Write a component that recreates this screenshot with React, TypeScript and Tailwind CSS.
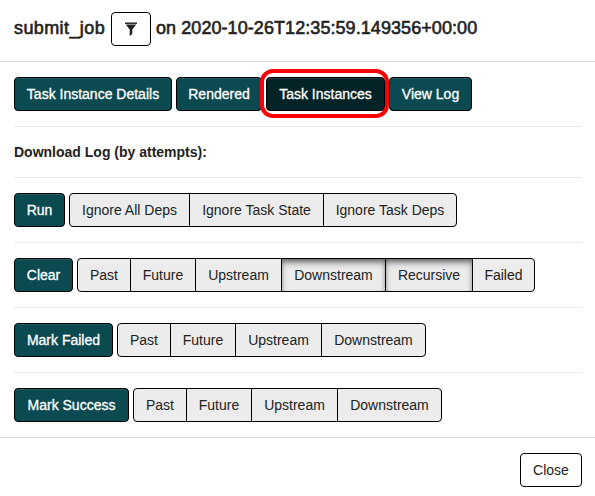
import React from "react";

type Option = { label: string; width: string; pressed?: boolean };

const past: Option = { label: "Past", width: "w-[54px]" };
const future: Option = { label: "Future", width: "w-[66px]" };
const upstream: Option = { label: "Upstream", width: "w-[87px]" };
const downstream: Option = { label: "Downstream", width: "w-[105px]" };

const rows: { action: string; width: string; options: Option[] }[] = [
  {
    action: "Run",
    width: "w-[51px]",
    options: [
      { label: "Ignore All Deps", width: "w-[121px]" },
      { label: "Ignore Task State", width: "w-[135px]" },
      { label: "Ignore Task Deps", width: "w-[134px]" },
    ],
  },
  {
    action: "Clear",
    width: "w-[59px]",
    options: [
      past,
      future,
      upstream,
      { ...downstream, pressed: true },
      { label: "Recursive", width: "w-[88px]", pressed: true },
      { label: "Failed", width: "w-[63px]" },
    ],
  },
  { action: "Mark Failed", width: "w-[99px]", options: [past, future, upstream, downstream] },
  { action: "Mark Success", width: "w-[115px]", options: [past, future, upstream, downstream] },
];

function Primary({ label, width, active }: { label: string; width: string; active?: boolean }) {
  return (
    <button
      className={`flex h-[34px] shrink-0 items-center justify-center whitespace-nowrap rounded-[4px] border border-black text-white [-webkit-text-stroke:0.3px_white] ${width} ${
        active ? "bg-[#042326] shadow-[inset_0_1px_0_#1d3b3e]" : "bg-[#0c4a51] shadow-[inset_0_1px_0_#245c62]"
      }`}
    >
      {label}
    </button>
  );
}

function Group({ options }: { options: Option[] }) {
  return (
    <div className="flex pl-px">
      {options.map((o) => (
        <button
          key={o.label}
          className={`-ml-px flex h-[34px] shrink-0 items-center justify-center whitespace-nowrap border border-black bg-[#ececec] text-[#222] first:rounded-l-[4px] last:rounded-r-[4px] ${o.width} ${
            o.pressed ? "shadow-[inset_0_5px_7px_-2px_rgba(0,0,0,0.55),inset_0_2px_4px_rgba(0,0,0,0.15)]" : ""
          }`}
        >
          {o.label}
        </button>
      ))}
    </div>
  );
}

export default function App() {
  return (
    <div className="h-[496px] w-[595px] overflow-hidden bg-white font-['Liberation_Sans',Arial,sans-serif] text-[14px] leading-5 text-[#222]">
      <header className="flex h-[62px] items-start border-b border-[#dfdfdf] pl-[14px] pt-3 text-[18px] leading-8 [-webkit-text-stroke:0.6px_#222]">
        <span className="w-[97px] whitespace-nowrap tracking-[0.4px]">submit_job</span>
        <button className="flex h-[34px] w-10 items-center justify-center rounded-[4px] border border-black bg-white">
          <svg width="12" height="14" viewBox="0 0 12 14" className="-mt-px">
            <path d="M0 0H12V1H0Z" fill="#888" />
            <path d="M0 1H12V2H0Z" fill="#333" />
            <path d="M0.8 2.6H11.2L7.3 7.5V12L4.7 14V7.5Z" fill="#222" />
          </svg>
        </button>
        <span className="ml-[5px] whitespace-nowrap tracking-[0.07px]">on 2020-10-26T12:35:59.149356+00:00</span>
      </header>

      <main className="pl-[14px] pr-[13px]">
        <div className="flex gap-1 pt-[15px]">
          <Primary label="Task Instance Details" width="w-[158px]" />
          <Primary label="Rendered" width="w-[86px]" />
          <div className="relative">
            <Primary label="Task Instances" width="w-[119px]" active />
            <div className="pointer-events-none absolute -left-[6px] -top-[8px] h-[49px] w-[129px] rounded-[13px] border-4 border-[#fb0007]" />
          </div>
          <Primary label="View Log" width="w-[83px]" />
        </div>
        <div className="mt-[15px] flex h-[52px] items-center border-y border-[#e9e9e9] font-bold">
          Download Log (by attempts):
        </div>
        {rows.map((row) => (
          <div key={row.action} className="flex h-[65px] gap-1 border-b border-[#e9e9e9] pt-[15px] last:border-0">
            <Primary label={row.action} width={row.width} />
            <Group options={row.options} />
          </div>
        ))}
      </main>

      <footer className="-mt-px flex justify-end border-t border-[#dfdfdf] pr-[13px] pt-[15px]">
        <button className="h-[34px] w-[62px] rounded-[4px] border border-black bg-white">Close</button>
      </footer>
    </div>
  );
}
